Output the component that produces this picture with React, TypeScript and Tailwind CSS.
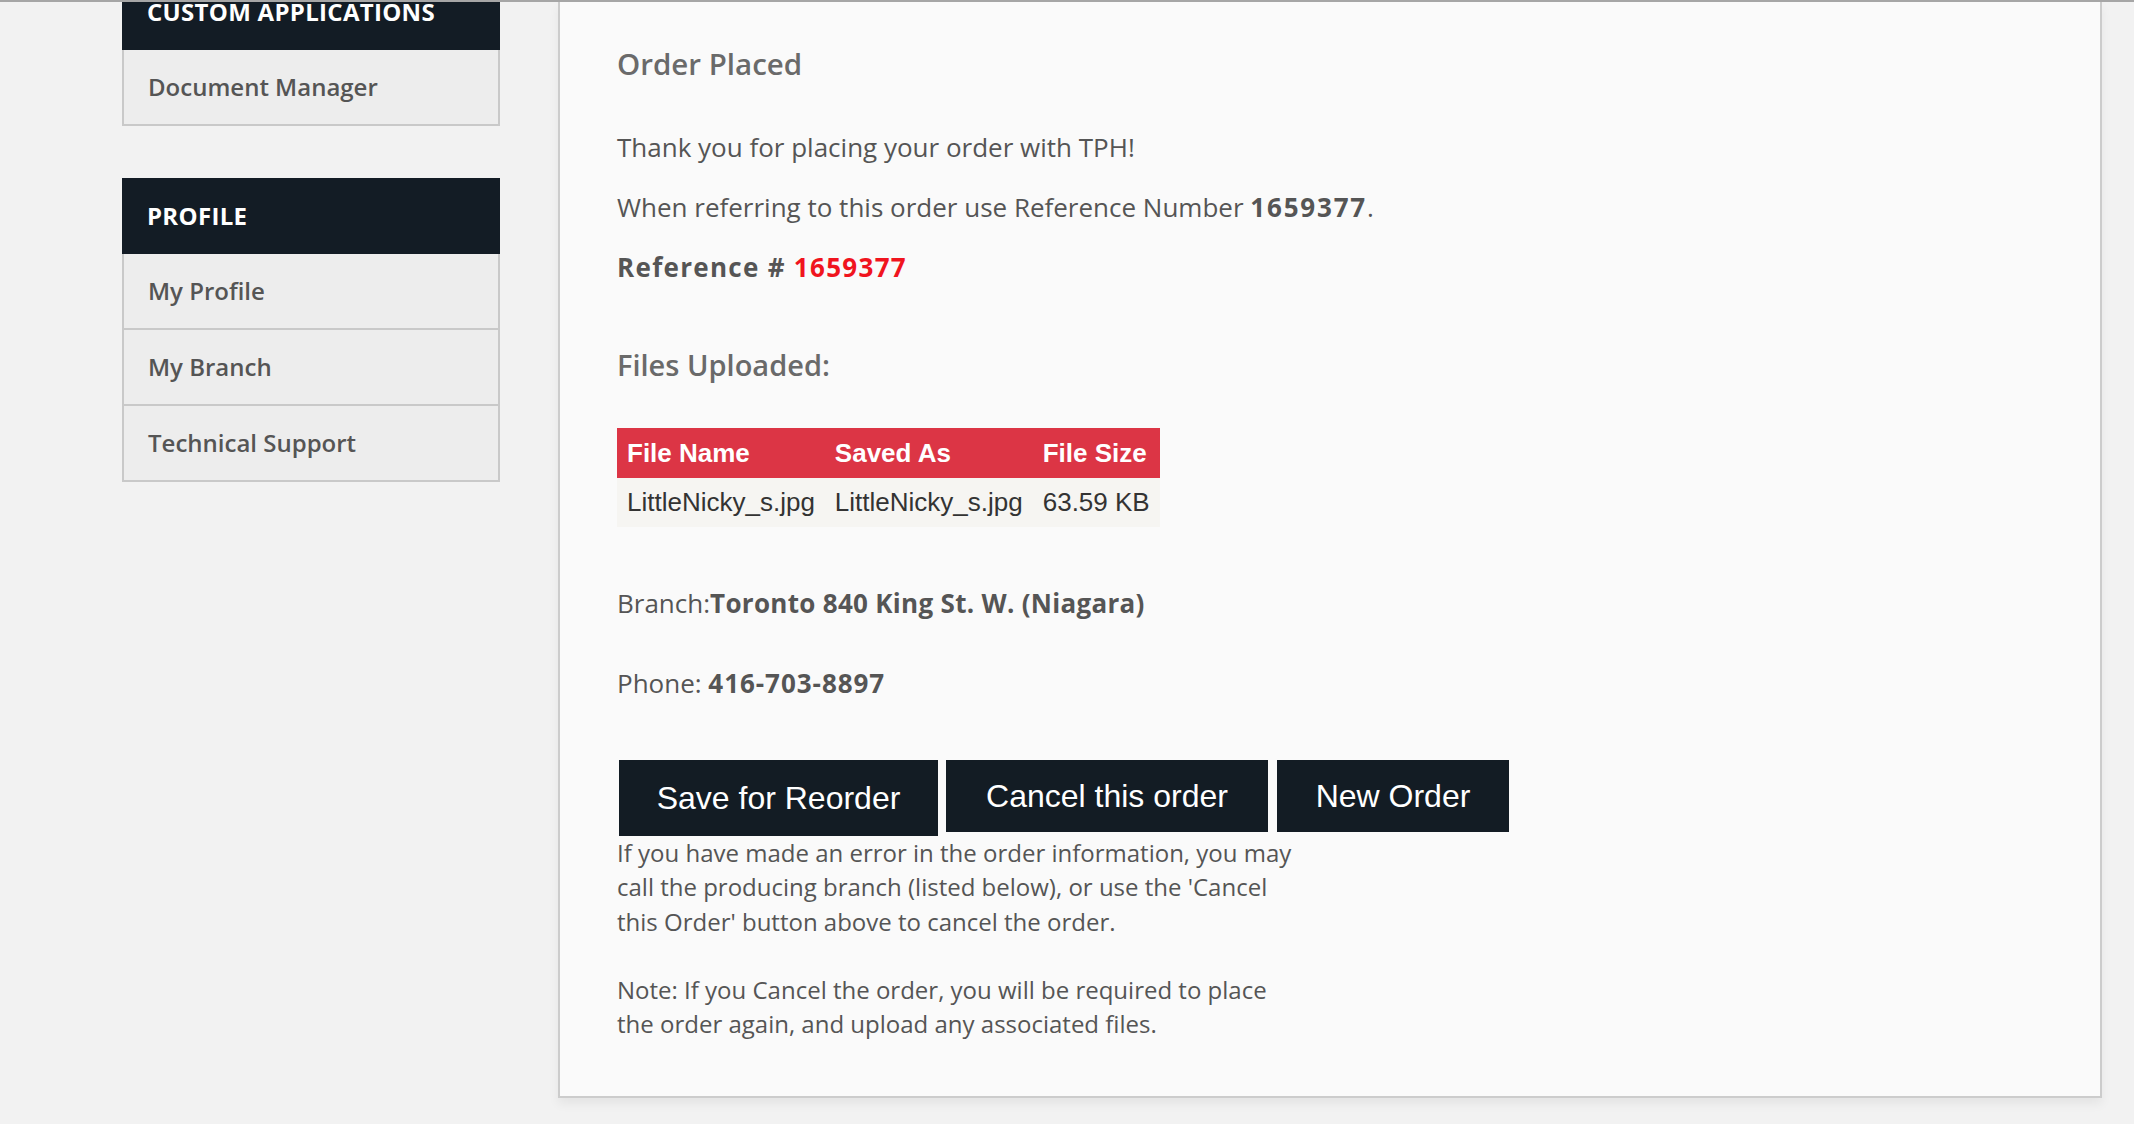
import React from "react";

const Item = ({ label }: { label: string }) => (
  <div className="h-[76px] flex items-center pl-[24px] bg-[#ededed] border-x-2 border-b-2 border-[#c9c9c9] text-[24px] font-semibold text-[#555]">
    {label}
  </div>
);

const Header = ({ label }: { label: string }) => (
  <div className="h-[76px] bg-[#131c25] text-white font-bold text-[24px] tracking-[0.3px] flex items-center pl-[25px]">
    {label}
  </div>
);

export default function App() {
  return (
    <div className="w-[2134px] h-[1124px] overflow-hidden bg-[#f2f2f2] border-t-2 border-[#a6a6a6] font-['Open_Sans',sans-serif]">
      <div className="flex items-start pl-[122px]">
        <aside className="w-[378px] shrink-0 mt-[-28px]">
          <Header label="CUSTOM APPLICATIONS" />
          <Item label="Document Manager" />
          <div className="h-[52px]" />
          <Header label="PROFILE" />
          <Item label="My Profile" />
          <Item label="My Branch" />
          <Item label="Technical Support" />
        </aside>
        <main className="ml-[58px] w-[1544px] h-[1096px] bg-[#fafafa] border-x-2 border-b-2 border-[#cccccc] shadow-[0_6px_10px_rgba(0,0,0,0.06)] pl-[57px] text-[#555] text-[26px]">
          <h2 className="mt-[44px] text-[29.5px] leading-[36px] font-semibold text-[#6a6a6a]">Order Placed</h2>
          <p className="mt-[45px] leading-[40px]">Thank you for placing your order with TPH!</p>
          <p className="mt-[20px] leading-[40px]">
            When referring to this order use Reference Number <b className="font-bold tracking-[1.8px]">1659377</b>.
          </p>
          <p className="mt-[20px] leading-[40px] font-bold tracking-[1.3px]">
            Reference # <span className="text-[#f0141e]">1659377</span>
          </p>
          <h3 className="mt-[61px] text-[29px] leading-[34px] font-semibold text-[#6a6a6a]">Files Uploaded:</h3>
          <table className="mt-[46px] font-['Liberation_Sans',Arial,sans-serif] text-[26px] border-collapse">
            <thead>
              <tr className="bg-[#dc3545] text-white font-bold h-[50px]">
                <th className="px-[10px] text-left font-bold">File Name</th>
                <th className="px-[10px] text-left font-bold">Saved As</th>
                <th className="px-[10px] text-left font-bold">File Size</th>
              </tr>
            </thead>
            <tbody>
              <tr className="bg-[#f6f5f2] text-[#333] h-[49px]">
                <td className="px-[10px]">LittleNicky_s.jpg</td>
                <td className="px-[10px]">LittleNicky_s.jpg</td>
                <td className="px-[10px]">63.59 KB</td>
              </tr>
            </tbody>
          </table>
          <p className="mt-[56px] leading-[40px]">
            Branch:<b className="font-bold tracking-[0.3px]">Toronto 840 King St. W. (Niagara)</b>
          </p>
          <p className="mt-[40px] leading-[40px]">
            Phone: <b className="font-bold tracking-[0.95px]">416-703-8897</b>
          </p>
          <div className="mt-[57px] flex items-start pl-[2px] font-['Liberation_Sans',Arial,sans-serif] text-white text-[32px]">
            <button className="w-[319px] h-[76px] bg-[#131c24]">Save for Reorder</button>
            <button className="ml-[8px] w-[322px] h-[72px] bg-[#131c24]">Cancel this order</button>
            <button className="ml-[9px] w-[232px] h-[72px] bg-[#131c24]">New Order</button>
          </div>
          <div className="w-[690px] text-[24px] leading-[34.3px]">
            <p>
              If you have made an error in the order information, you may call the producing branch (listed below), or use the 'Cancel this Order' button above to cancel the order.
            </p>
            <p className="mt-[34.3px]">
              Note: If you Cancel the order, you will be required to place the order again, and upload any associated files.
            </p>
          </div>
        </main>
      </div>
    </div>
  );
}
